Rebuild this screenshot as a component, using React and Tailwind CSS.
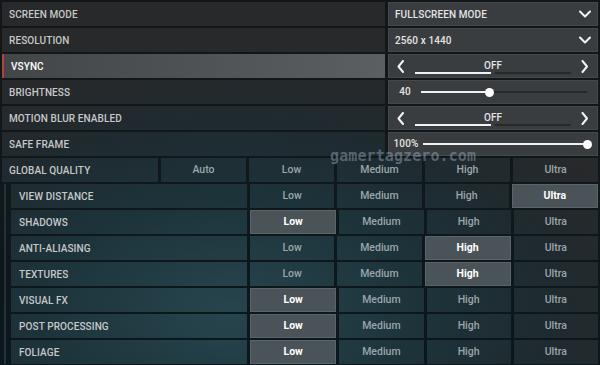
import React from 'react';

// shared backdrop so the teal glow runs continuously across every cell
const glow =
  'bg-[radial-gradient(ellipse_430px_250px_at_230px_310px,#27454e_0%,#1d333a_45%,#1f2a2f_75%,#27292b_100%)] bg-fixed';

const Chevron = ({ dir = 'down' }) => {
  const d = {
    down: 'M1 1.5 L6 6.5 L11 1.5',
    left: 'M6 1 L1.5 6.5 L6 12',
    right: 'M1.5 1 L6 6.5 L1.5 12',
  }[dir];
  const size = dir === 'down' ? { w: 12, h: 8 } : { w: 8, h: 13 };
  return (
    <svg width={size.w} height={size.h} viewBox={`0 0 ${size.w} ${size.h}`} className="shrink-0">
      <path d={d} fill="none" stroke="#f2f2f2" strokeWidth="2" strokeLinecap="round" strokeLinejoin="round" />
    </svg>
  );
};

const Dropdown = ({ value }) => (
  <div className="flex items-center justify-between h-full pl-[6px] pr-[6px] text-[#e4e4e4]">
    <span>{value}</span>
    <Chevron />
  </div>
);

const Toggle = ({ value }) => (
  <div className="flex items-center h-full px-[8px] gap-[10px]">
    <Chevron dir="left" />
    <div className="flex-1 flex flex-col items-center h-full pt-[5px]">
      <span className="text-[#e4e4e4] leading-[12px]">{value}</span>
      <div className="flex w-full gap-[4px] mt-auto mb-[4px]">
        <div className="flex-1 h-[2px] bg-[#f0f0f0]" />
        <div className="flex-1 h-[2px] bg-[#26282a]" />
      </div>
    </div>
    <Chevron dir="right" />
  </div>
);

const Slider = ({ label, pct, labelW }) => (
  <div className="flex items-center h-full pl-[4px] pr-[10px] text-[#e4e4e4]">
    <span className={`${labelW} text-center leading-[10px]`}>{label}</span>
    <div className="relative flex-1 h-[2px] bg-[#26282a] ml-[4px]">
      <div className="absolute left-0 top-0 h-[2px] bg-[#f0f0f0]" style={{ width: `${pct}%` }} />
      <div
        className="absolute top-1/2 w-[9px] h-[9px] -mt-[4.5px] -ml-[4.5px] rounded-full bg-white"
        style={{ left: `${pct}%` }}
      />
    </div>
  </div>
);

const SettingRow = ({ label, active, children }) => (
  <div className="flex gap-[3px] h-[24px]">
    <div
      className={`w-[383px] flex items-center pl-[7px] ${
        active
          ? 'bg-gradient-to-r from-[#434648] to-[#5c5f61] border-l-2 border-[#b5403f] pl-[5px] text-white'
          : `${glow} text-[#c6c8c9]`
      }`}
    >
      {label}
    </div>
    <div className="flex-1 bg-[#3a3d40] border border-[#46494c]">{children}</div>
  </div>
);

const Cell = ({ text, on }) => (
  <div
    className={`flex-1 flex items-center justify-center ${
      on ? 'bg-[#4a5357] border border-[#5b6468] text-white font-bold' : `${glow} text-[#9aa6aa]`
    }`}
  >
    <span className="leading-[12px]">{text}</span>
  </div>
);

const levels = ['Low', 'Medium', 'High', 'Ultra'];

const subRows = [
  { label: 'VIEW DISTANCE', sel: 'Ultra' },
  { label: 'SHADOWS', sel: 'Low' },
  { label: 'ANTI-ALIASING', sel: 'High' },
  { label: 'TEXTURES', sel: 'High' },
  { label: 'VISUAL FX', sel: 'Low' },
  { label: 'POST PROCESSING', sel: 'Low' },
  { label: 'FOLIAGE', sel: 'Low' },
];

export default function App() {
  return (
    <div className="relative w-[600px] h-[365px] overflow-hidden bg-gradient-to-b from-[#131618] via-[#10181b] to-[#0a171c] font-['Roboto',sans-serif] text-[10px] font-medium tracking-[0.01em]">
      <div className="flex flex-col gap-[2px] pt-[2px] px-[2px]">
        <SettingRow label="SCREEN MODE">
          <Dropdown value="FULLSCREEN MODE" />
        </SettingRow>
        <SettingRow label="RESOLUTION">
          <Dropdown value="2560 x 1440" />
        </SettingRow>
        <SettingRow label="VSYNC" active>
          <Toggle value="OFF" />
        </SettingRow>
        <SettingRow label="BRIGHTNESS">
          <Slider label="40" pct={41} labelW="w-[24px]" />
        </SettingRow>
        <SettingRow label="MOTION BLUR ENABLED">
          <Toggle value="OFF" />
        </SettingRow>
        <SettingRow label="SAFE FRAME">
          <Slider label="100%" pct={100} labelW="w-[26px]" />
        </SettingRow>

        {/* global quality row */}
        <div className="flex gap-[3px] h-[24px] text-[10.5px] tracking-normal">
          <div className={`w-[156px] flex items-center pl-[7px] ${glow} text-[#c6c8c9] text-[10px] tracking-[0.01em]`}>
            GLOBAL QUALITY
          </div>
          <Cell text="Auto" />
          {levels.map((l) => (
            <Cell key={l} text={l} />
          ))}
        </div>

        {/* per-setting rows */}
        <div className="flex">
          <div className="w-[9px] flex justify-center pr-[3px]">
            <div className="w-[2px] bg-[#263137]" />
          </div>
          <div className="flex-1 flex flex-col gap-[2px]">
            {subRows.map((r) => (
              <div key={r.label} className="flex gap-[3px] h-[24px] text-[10.5px] tracking-normal">
                <div className={`w-[236px] flex items-center pl-[8px] ${glow} text-[#c6c8c9] text-[10px] tracking-[0.01em]`}>
                  {r.label}
                </div>
                {levels.map((l) => (
                  <Cell key={l} text={l} on={r.sel === l} />
                ))}
              </div>
            ))}
          </div>
        </div>
      </div>

      {/* watermark */}
      <div className="absolute left-[330px] top-[150px] leading-[12px] font-['DejaVu_Sans_Mono',monospace] font-bold text-[15px] text-[#9fb3c4]/45 pointer-events-none">
        gamertagzero.com
      </div>
    </div>
  );
}
